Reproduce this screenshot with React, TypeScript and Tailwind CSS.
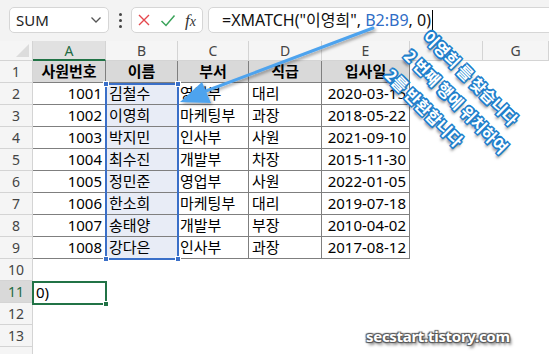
import React from "react";

const COLS = ["A", "B", "C", "D", "E", "F", "G"];

type Row = [string, string, string, string, string];
const DATA: Row[] = [
  ["1001", "김철수", "영업부", "대리", "2020-03-15"],
  ["1002", "이영희", "마케팅부", "과장", "2018-05-22"],
  ["1003", "박지민", "인사부", "사원", "2021-09-10"],
  ["1004", "최수진", "개발부", "차장", "2015-11-30"],
  ["1005", "정민준", "영업부", "사원", "2022-01-05"],
  ["1006", "한소희", "마케팅부", "대리", "2019-07-18"],
  ["1007", "송태양", "개발부", "부장", "2010-04-02"],
  ["1008", "강다은", "인사부", "과장", "2017-08-12"],
];

const HEAD = ["사원번호", "이름", "부서", "직급", "입사일"];

const outline =
  "[text-shadow:1.5px_0_0_#1f7fcc,-1.5px_0_0_#1f7fcc,0_1.5px_0_#1f7fcc,0_-1.5px_0_#1f7fcc,1.5px_1.5px_0_#1f7fcc,-1.5px_-1.5px_0_#1f7fcc,1.5px_-1.5px_0_#1f7fcc,-1.5px_1.5px_0_#1f7fcc,2px_3px_3px_rgba(0,0,0,0.55)]";

function RowHeader({ n, active, hideLabel }: { n: number; active?: boolean; hideLabel?: boolean }) {
  return (
    <div
      className={
        "flex items-center justify-center border-b border-r border-[#d4d4d4] text-[14px] " +
        (active ? "bg-[#d9d9d9] text-[#1e6b43]" : "bg-[#f5f5f5] text-[#444]")
      }
    >
      {hideLabel ? "" : n}
    </div>
  );
}

export default function App() {
  return (
    <div className="relative w-[549px] h-[354px] overflow-hidden bg-white font-['Noto_Sans','Noto_Sans_CJK_KR',sans-serif] text-black">
      {/* Formula bar */}
      <div className="h-[41px] bg-[#f3f3f3] flex items-start pt-[7px]">
        <div className="ml-[9px] w-[100px] h-[26px] bg-white border border-[#d6d6d6] rounded-[5px] flex items-center justify-between pl-[6px] pr-[6px]">
          <span className="text-[15px] leading-none text-[#222]">SUM</span>
          <svg width="12" height="8" viewBox="0 0 12 8">
            <path d="M1.5 1.5 L6 6 L10.5 1.5" fill="none" stroke="#555" strokeWidth="1.3" />
          </svg>
        </div>
        <div className="w-[22px] h-[26px] flex flex-col items-center justify-center gap-[3px]">
          <span className="w-[3px] h-[3px] rounded-full bg-[#444]" />
          <span className="w-[3px] h-[3px] rounded-full bg-[#444]" />
          <span className="w-[3px] h-[3px] rounded-full bg-[#444]" />
        </div>
        <div className="w-[72px] h-[26px] bg-white border border-[#d6d6d6] rounded-[5px] flex items-center pl-[5px] gap-[9px]">
          <svg width="14" height="14" viewBox="0 0 14 14">
            <path d="M2 2 L12 12 M12 2 L2 12" stroke="#e5484d" strokeWidth="1.4" />
          </svg>
          <svg width="16" height="13" viewBox="0 0 16 13">
            <path d="M1.5 7 L6 11.5 L14.5 1.5" fill="none" stroke="#3aa35a" strokeWidth="1.5" />
          </svg>
          <span className="font-['Liberation_Serif',serif] italic text-[17px] leading-none text-[#333]">
            f<span className="text-[14px]">x</span>
          </span>
        </div>
        <div className="ml-[5px] flex-1 -mr-[10px] h-[26px] bg-white border border-[#d6d6d6] rounded-l-[5px] flex items-center pl-[13px]">
          <span className="text-[16px] leading-none text-[#111] whitespace-nowrap">
            =XMATCH("이영희", <span className="text-[#2f6dc6]">B2:B9</span>, 0)
          </span>
          <span className="ml-[1px] w-[1px] h-[20px] bg-black" />
        </div>
      </div>

      {/* Grid */}
      <div className="grid grid-cols-[33px_73px_72px_71px_73px_88px_73px_66px] grid-rows-[20px_repeat(14,22px)]">
        {/* corner */}
        <div className="relative bg-[#f5f5f5] border-r border-b border-[#d4d4d4]">
          <div className="absolute right-[3px] bottom-[3px] w-0 h-0 border-l-[13px] border-l-transparent border-b-[13px] border-b-[#dcdcdc]" />
        </div>
        {COLS.map((c) => (
          <div
            key={c}
            className={
              "flex items-center justify-center text-[14px] border-r border-[#d4d4d4] " +
              (c === "A"
                ? "bg-[#e1e1e1] text-[#1e6b43] border-b-2 border-b-[#217346]"
                : "bg-[#f5f5f5] text-[#444] border-b border-b-[#d4d4d4]")
            }
          >
            {c}
          </div>
        ))}

        {/* Row 1 */}
        <RowHeader n={1} />
        {HEAD.map((h) => (
          <div
            key={h}
            className="flex items-center justify-center bg-[#d9d9d9] border-r border-b border-[#7f7f7f] text-[15px] font-bold leading-none"
          >
            {h}
          </div>
        ))}
        <div />
        <div />

        {DATA.map((r, i) => (
          <React.Fragment key={i}>
            <RowHeader n={i + 2} />
            <div className="flex items-center justify-end pr-[3px] border-r border-b border-[#7f7f7f] text-[15px] leading-none">
              {r[0]}
            </div>
            <div className="flex items-center pl-[3px] bg-[#e8ecf6] border-r border-b border-[#7f7f7f] text-[15px] leading-none">
              {r[1]}
            </div>
            <div className="flex items-center pl-[2px] border-r border-b border-[#7f7f7f] text-[15px] leading-none whitespace-nowrap">
              {r[2]}
            </div>
            <div className="flex items-center pl-[3px] border-r border-b border-[#7f7f7f] text-[15px] leading-none">
              {r[3]}
            </div>
            <div className="flex items-center justify-end pr-[3px] border-r border-b border-[#7f7f7f] text-[15px] leading-none">
              {r[4]}
            </div>
            <div />
            <div />
          </React.Fragment>
        ))}

        {[10, 11, 12, 13, 14].map((n) => (
          <React.Fragment key={n}>
            <RowHeader n={n} active={n === 11} hideLabel={n === 14} />
            <div className="flex items-center pl-[3px] text-[15px] leading-none">{n === 11 ? "0)" : ""}</div>
            <div />
            <div />
            <div />
            <div />
            <div />
            <div />
          </React.Fragment>
        ))}
      </div>

      {/* B2:B9 range selection */}
      <div className="absolute left-[105px] top-[83px] w-[74px] h-[177px] border-2 border-[#3a6fc8] pointer-events-none">
        <span className="absolute -left-[4px] -top-[4px] w-[6px] h-[6px] bg-[#3a6fc8] border border-white" />
        <span className="absolute -right-[4px] -top-[4px] w-[6px] h-[6px] bg-[#3a6fc8] border border-white" />
        <span className="absolute -left-[4px] -bottom-[4px] w-[6px] h-[6px] bg-[#3a6fc8] border border-white" />
        <span className="absolute -right-[4px] -bottom-[4px] w-[6px] h-[6px] bg-[#3a6fc8] border border-white" />
      </div>

      {/* Active cell A11 */}
      <div className="absolute left-[32px] top-[281px] w-[75px] h-[24px] border-2 border-[#217346] pointer-events-none">
        <span className="absolute -right-[4px] -bottom-[4px] w-[6px] h-[6px] bg-[#217346] border border-white" />
      </div>

      {/* Arrow */}
      <svg className="absolute left-0 top-0 pointer-events-none" width="549" height="354">
        <defs>
          <filter id="sh" x="-20%" y="-20%" width="140%" height="140%">
            <feDropShadow dx="1.5" dy="2" stdDeviation="1.5" floodColor="#000" floodOpacity="0.35" />
          </filter>
        </defs>
        <g filter="url(#sh)">
          <line x1="373" y1="28" x2="198" y2="94" stroke="#4ea3ee" strokeWidth="3" strokeLinecap="round" />
          <polygon points="180,102 202,82 211,103" fill="#4ea3ee" />
        </g>
      </svg>

      {/* Rotated annotation */}
      <div
        className={
          "absolute left-[436px] top-[24px] origin-top-left rotate-[45deg] text-white font-bold text-[16px] leading-[27px] whitespace-nowrap font-['Noto_Sans_CJK_KR',sans-serif] " +
          outline
        }
      >
        <div>이영희 를 찾습니다</div>
        <div>2 번째 행에 위치하여</div>
        <div>2를 반환합니다</div>
      </div>

      {/* Watermark */}
      <div className="absolute left-[366px] top-[329px] text-white font-bold text-[15px] tracking-[-0.3px] leading-none font-['Noto_Sans',sans-serif] [text-shadow:1px_1px_1px_#555,-1px_-1px_1px_#555,1px_-1px_1px_#555,-1px_1px_1px_#555,2px_3px_3px_rgba(0,0,0,0.5)]">
        secstart.tistory.com
      </div>
    </div>
  );
}
